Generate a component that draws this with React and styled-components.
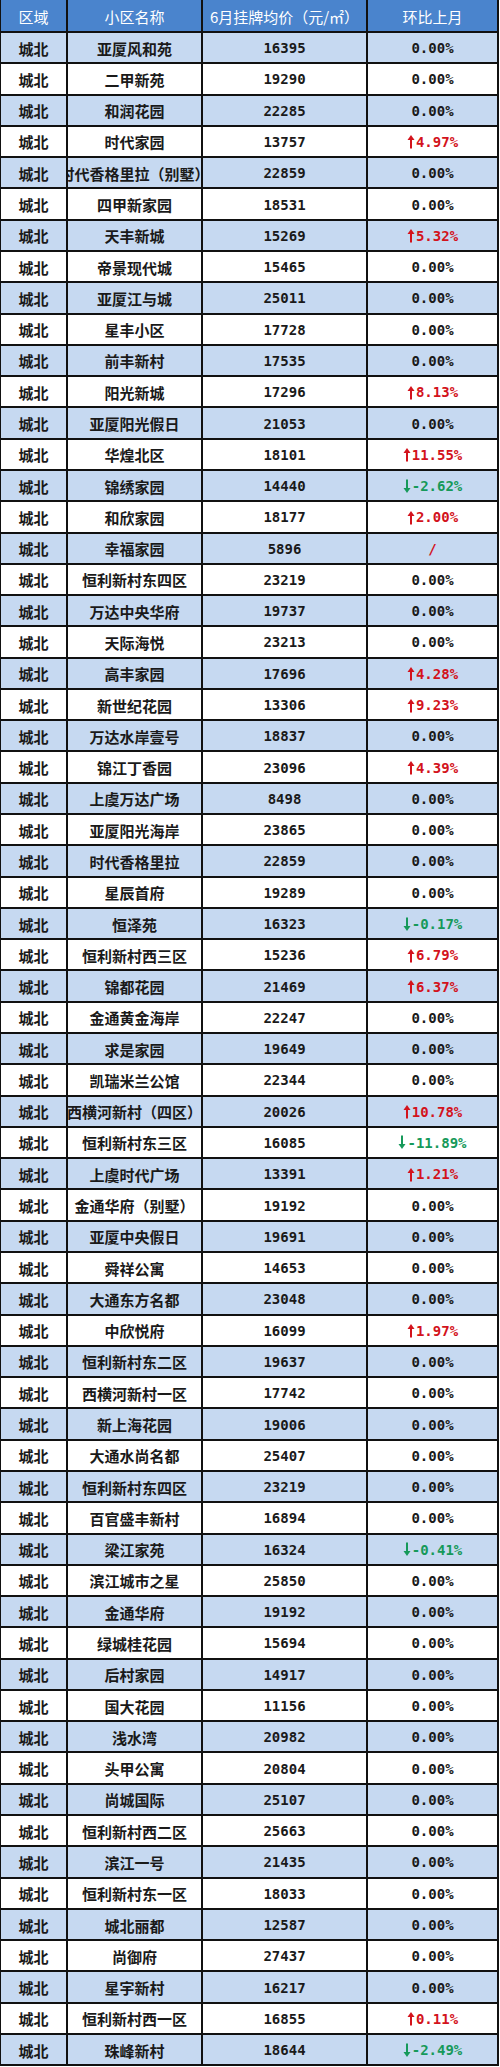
import React from "react";
import styled, { createGlobalStyle } from "styled-components";

const GlobalStyle = createGlobalStyle`
  html, body { margin: 0; padding: 0; background: #ffffff; }
  body { font-family: "Noto Sans CJK SC", "Noto Sans", sans-serif; }
`;

const rows = [
  ["亚厦风和苑", "16395", "0.00%"],
  ["二甲新苑", "19290", "0.00%"],
  ["和润花园", "22285", "0.00%"],
  ["时代家园", "13757", "4.97%", "up"],
  ["时代香格里拉（别墅）", "22859", "0.00%"],
  ["四甲新家园", "18531", "0.00%"],
  ["天丰新城", "15269", "5.32%", "up"],
  ["帝景现代城", "15465", "0.00%"],
  ["亚厦江与城", "25011", "0.00%"],
  ["星丰小区", "17728", "0.00%"],
  ["前丰新村", "17535", "0.00%"],
  ["阳光新城", "17296", "8.13%", "up"],
  ["亚厦阳光假日", "21053", "0.00%"],
  ["华煌北区", "18101", "11.55%", "up"],
  ["锦绣家园", "14440", "-2.62%", "down"],
  ["和欣家园", "18177", "2.00%", "up"],
  ["幸福家园", "5896", "/", "slash"],
  ["恒利新村东四区", "23219", "0.00%"],
  ["万达中央华府", "19737", "0.00%"],
  ["天际海悦", "23213", "0.00%"],
  ["高丰家园", "17696", "4.28%", "up"],
  ["新世纪花园", "13306", "9.23%", "up"],
  ["万达水岸壹号", "18837", "0.00%"],
  ["锦江丁香园", "23096", "4.39%", "up"],
  ["上虞万达广场", "8498", "0.00%"],
  ["亚厦阳光海岸", "23865", "0.00%"],
  ["时代香格里拉", "22859", "0.00%"],
  ["星辰首府", "19289", "0.00%"],
  ["恒泽苑", "16323", "-0.17%", "down"],
  ["恒利新村西三区", "15236", "6.79%", "up"],
  ["锦都花园", "21469", "6.37%", "up"],
  ["金通黄金海岸", "22247", "0.00%"],
  ["求是家园", "19649", "0.00%"],
  ["凯瑞米兰公馆", "22344", "0.00%"],
  ["西横河新村（四区）", "20026", "10.78%", "up"],
  ["恒利新村东三区", "16085", "-11.89%", "down"],
  ["上虞时代广场", "13391", "1.21%", "up"],
  ["金通华府（别墅）", "19192", "0.00%"],
  ["亚厦中央假日", "19691", "0.00%"],
  ["舜祥公寓", "14653", "0.00%"],
  ["大通东方名都", "23048", "0.00%"],
  ["中欣悦府", "16099", "1.97%", "up"],
  ["恒利新村东二区", "19637", "0.00%"],
  ["西横河新村一区", "17742", "0.00%"],
  ["新上海花园", "19006", "0.00%"],
  ["大通水尚名都", "25407", "0.00%"],
  ["恒利新村东四区", "23219", "0.00%"],
  ["百官盛丰新村", "16894", "0.00%"],
  ["梁江家苑", "16324", "-0.41%", "down"],
  ["滨江城市之星", "25850", "0.00%"],
  ["金通华府", "19192", "0.00%"],
  ["绿城桂花园", "15694", "0.00%"],
  ["后村家园", "14917", "0.00%"],
  ["国大花园", "11156", "0.00%"],
  ["浅水湾", "20982", "0.00%"],
  ["头甲公寓", "20804", "0.00%"],
  ["尚城国际", "25107", "0.00%"],
  ["恒利新村西二区", "25663", "0.00%"],
  ["滨江一号", "21435", "0.00%"],
  ["恒利新村东一区", "18033", "0.00%"],
  ["城北丽都", "12587", "0.00%"],
  ["尚御府", "27437", "0.00%"],
  ["星宇新村", "16217", "0.00%"],
  ["恒利新村西一区", "16855", "0.11%", "up"],
  ["珠峰新村", "18644", "-2.49%", "down"],
];

const Table = styled.div`
  width: 499px;
  box-sizing: border-box;
  border-left: 1px solid #111;
  border-right: 2px solid #111;
  background: #fff;
`;

const Row = styled.div`
  display: grid;
  grid-template-columns: 67px 135px 165px 1fr;
  height: ${(p) => p.$h}px;
  box-sizing: border-box;
  border-bottom: 2px solid #111;
  background: ${(p) => (p.$header ? "#4a84cd" : p.$shaded ? "#c6d9f1" : "#ffffff")};
  color: ${(p) => (p.$header ? "#ffffff" : "#1a1a1a")};
`;

const Cell = styled.div`
  display: flex;
  align-items: center;
  justify-content: center;
  overflow: hidden;
  white-space: nowrap;
  min-width: 0;
  box-sizing: border-box;
  border-right: ${(p) => (p.$last ? "none" : "2px solid #111")};
  font-family: ${(p) =>
    p.$mono
      ? '"DejaVu Sans Mono", "Liberation Mono", "Noto Sans CJK SC", monospace'
      : '"Noto Sans CJK SC", "Noto Sans", sans-serif'};
  font-size: ${(p) => (p.$mono ? "14px" : "15px")};
  font-weight: ${(p) => (p.$light ? 400 : 700)};
  line-height: 1;
  padding-top: 1px;
`;

const Change = styled.span`
  display: inline-flex;
  align-items: center;
  gap: 1px;
  color: ${(p) => (p.$dir === "up" || p.$dir === "slash" ? "#d3131c" : p.$dir === "down" ? "#16995a" : "#1a1a1a")};
`;

const Arrow = ({ dir }) => (
  <svg width="8" height="15" viewBox="0 0 8 15" aria-hidden="true">
    {dir === "up" ? (
      <>
        <path d="M4 1 L7.5 6 L0.5 6 Z" fill="currentColor" />
        <rect x="3" y="5" width="2" height="9.5" fill="currentColor" />
      </>
    ) : (
      <>
        <path d="M4 14 L7.5 9 L0.5 9 Z" fill="currentColor" />
        <rect x="3" y="0.5" width="2" height="9.5" fill="currentColor" />
      </>
    )}
  </svg>
);

export default function App() {
  const bodyH = 2034 / 65;
  return (
    <>
      <GlobalStyle />
      <Table>
        <Row $header $h={33}>
          <Cell $light>区域</Cell>
          <Cell $light>小区名称</Cell>
          <Cell $light>6月挂牌均价（元/㎡）</Cell>
          <Cell $light $last>环比上月</Cell>
        </Row>
        {rows.map(([name, price, change, dir], i) => (
          <Row key={i} $shaded={i % 2 === 0} $h={bodyH}>
            <Cell>城北</Cell>
            <Cell>{name}</Cell>
            <Cell $mono>{price}</Cell>
            <Cell $mono $last>
              <Change $dir={dir}>
                {(dir === "up" || dir === "down") && <Arrow dir={dir} />}
                {change}
              </Change>
            </Cell>
          </Row>
        ))}
      </Table>
    </>
  );
}
